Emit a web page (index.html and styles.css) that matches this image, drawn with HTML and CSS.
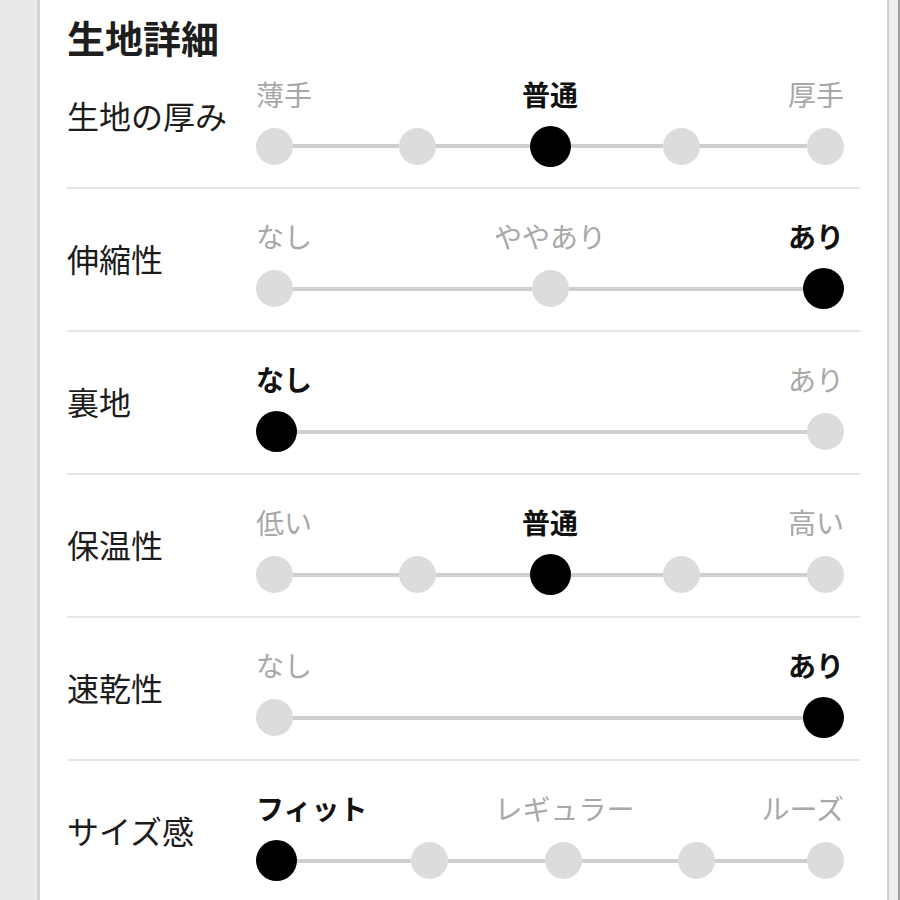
FILE: index.html
```html
<!DOCTYPE html>
<html lang="ja">
<head>
  <meta charset="UTF-8" />
  <meta name="viewport" content="width=device-width, initial-scale=1.0"/>
  <title>生地詳細</title>
  <link rel="stylesheet" href="styles.css">
</head>
<body>
  <div class="panel">
    <h2 class="title">生地詳細</h2>

    <!-- 生地の厚み -->
    <div class="row first">
      <div class="row-label">生地の厚み</div>
      <div class="scale">
        <div class="scale-text">
          <span>薄手</span>
          <span class="on">普通</span>
          <span>厚手</span>
        </div>
        <div class="track track-five">
          <span class="dot"></span><span class="seg"></span>
          <span class="dot"></span><span class="seg"></span>
          <span class="dot on"></span><span class="seg"></span>
          <span class="dot"></span><span class="seg"></span>
          <span class="dot"></span>
        </div>
      </div>
    </div>

    <!-- 伸縮性 -->
    <div class="row">
      <div class="row-label">伸縮性</div>
      <div class="scale">
        <div class="scale-text">
          <span>なし</span>
          <span>ややあり</span>
          <span class="on">あり</span>
        </div>
        <div class="track track-three">
          <span class="dot"></span><span class="seg"></span>
          <span class="dot"></span><span class="seg"></span>
          <span class="dot on"></span>
        </div>
      </div>
    </div>

    <!-- 裏地 -->
    <div class="row">
      <div class="row-label">裏地</div>
      <div class="scale">
        <div class="scale-text">
          <span class="on">なし</span>
          <span>あり</span>
        </div>
        <div class="track">
          <span class="dot on"></span><span class="seg"></span>
          <span class="dot"></span>
        </div>
      </div>
    </div>

    <!-- 保温性 -->
    <div class="row">
      <div class="row-label">保温性</div>
      <div class="scale">
        <div class="scale-text">
          <span>低い</span>
          <span class="on">普通</span>
          <span>高い</span>
        </div>
        <div class="track track-five">
          <span class="dot"></span><span class="seg"></span>
          <span class="dot"></span><span class="seg"></span>
          <span class="dot on"></span><span class="seg"></span>
          <span class="dot"></span><span class="seg"></span>
          <span class="dot"></span>
        </div>
      </div>
    </div>

    <!-- 速乾性 -->
    <div class="row">
      <div class="row-label">速乾性</div>
      <div class="scale">
        <div class="scale-text">
          <span>なし</span>
          <span class="on">あり</span>
        </div>
        <div class="track">
          <span class="dot"></span><span class="seg"></span>
          <span class="dot on"></span>
        </div>
      </div>
    </div>

    <!-- サイズ感 -->
    <div class="row">
      <div class="row-label">サイズ感</div>
      <div class="scale">
        <div class="scale-text">
          <span class="on">フィット</span>
          <span>レギュラー</span>
          <span>ルーズ</span>
        </div>
        <div class="track track-size">
          <span class="dot on"></span><span class="seg"></span>
          <span class="dot"></span><span class="seg"></span>
          <span class="dot"></span><span class="seg"></span>
          <span class="dot"></span><span class="seg"></span>
          <span class="dot"></span>
        </div>
      </div>
    </div>
  </div>
  <div class="edge"></div>
</body>
</html>
```

FILE: styles.css
```css
* { box-sizing: border-box; }

body {
  margin: 0;
  display: flex;
  height: 900px;
  overflow: hidden;
  background: #e9e9e9;
  font-family: "Noto Sans CJK JP", "Noto Sans", sans-serif;
  color: #222;
}

.panel {
  margin-left: 37px;
  width: 852px;
  padding: 0 27px;
  background: #fff;
  border-left: 3px solid #d3d3d3;
  border-right: 2px solid #d0d0d0;
}

.edge {
  width: 11px;
  background: #efefef;
  border-right: 2px solid #9c9c9c;
}

.title {
  margin: 19px 0 0;
  font-size: 38px;
  line-height: 36px;
  font-weight: 700;
  color: #1e1e1e;
}

.row {
  display: flex;
  align-items: center;
  height: 143px;
  padding: 29px 16px 21px 0;
  border-bottom: 2px solid #e6e6e6;
}

.row.first {
  height: 134px;
  padding-top: 20px;
  padding-bottom: 20px;
}

.row-label {
  width: 189px;
  flex-shrink: 0;
  font-size: 32px;
  line-height: 40px;
  padding-bottom: 12px;
  color: #1c1c1c;
}

.scale {
  flex: 1;
}

.scale-text {
  display: flex;
  justify-content: space-between;
  font-size: 28px;
  line-height: 36px;
  color: #a8a8a8;
}

.scale-text .on {
  color: #111;
  font-weight: 700;
}

.track {
  display: flex;
  align-items: center;
  height: 41px;
  margin-top: 14px;
}

.dot {
  width: 37px;
  height: 37px;
  border-radius: 50%;
  background: #dcdcdc;
  flex-shrink: 0;
}

.dot.on {
  width: 41px;
  height: 41px;
  background: #000;
}

.seg {
  flex: 1;
  height: 4px;
  background: #cfcfcf;
}

/* spacing of the dots, as in the app */
.track-five .seg:nth-child(2) { flex-grow: 106; }
.track-five .seg:nth-child(4) { flex-grow: 94; }
.track-five .seg:nth-child(6) { flex-grow: 92; }
.track-five .seg:nth-child(8) { flex-grow: 107; }

.track-three .seg:nth-child(2) { flex-grow: 239; }
.track-three .seg:nth-child(4) { flex-grow: 234; }

.track-size .seg:nth-child(2) { flex-grow: 114; }
.track-size .seg:nth-child(4) { flex-grow: 97; }
.track-size .seg:nth-child(6) { flex-grow: 96; }
.track-size .seg:nth-child(8) { flex-grow: 92; }
```
